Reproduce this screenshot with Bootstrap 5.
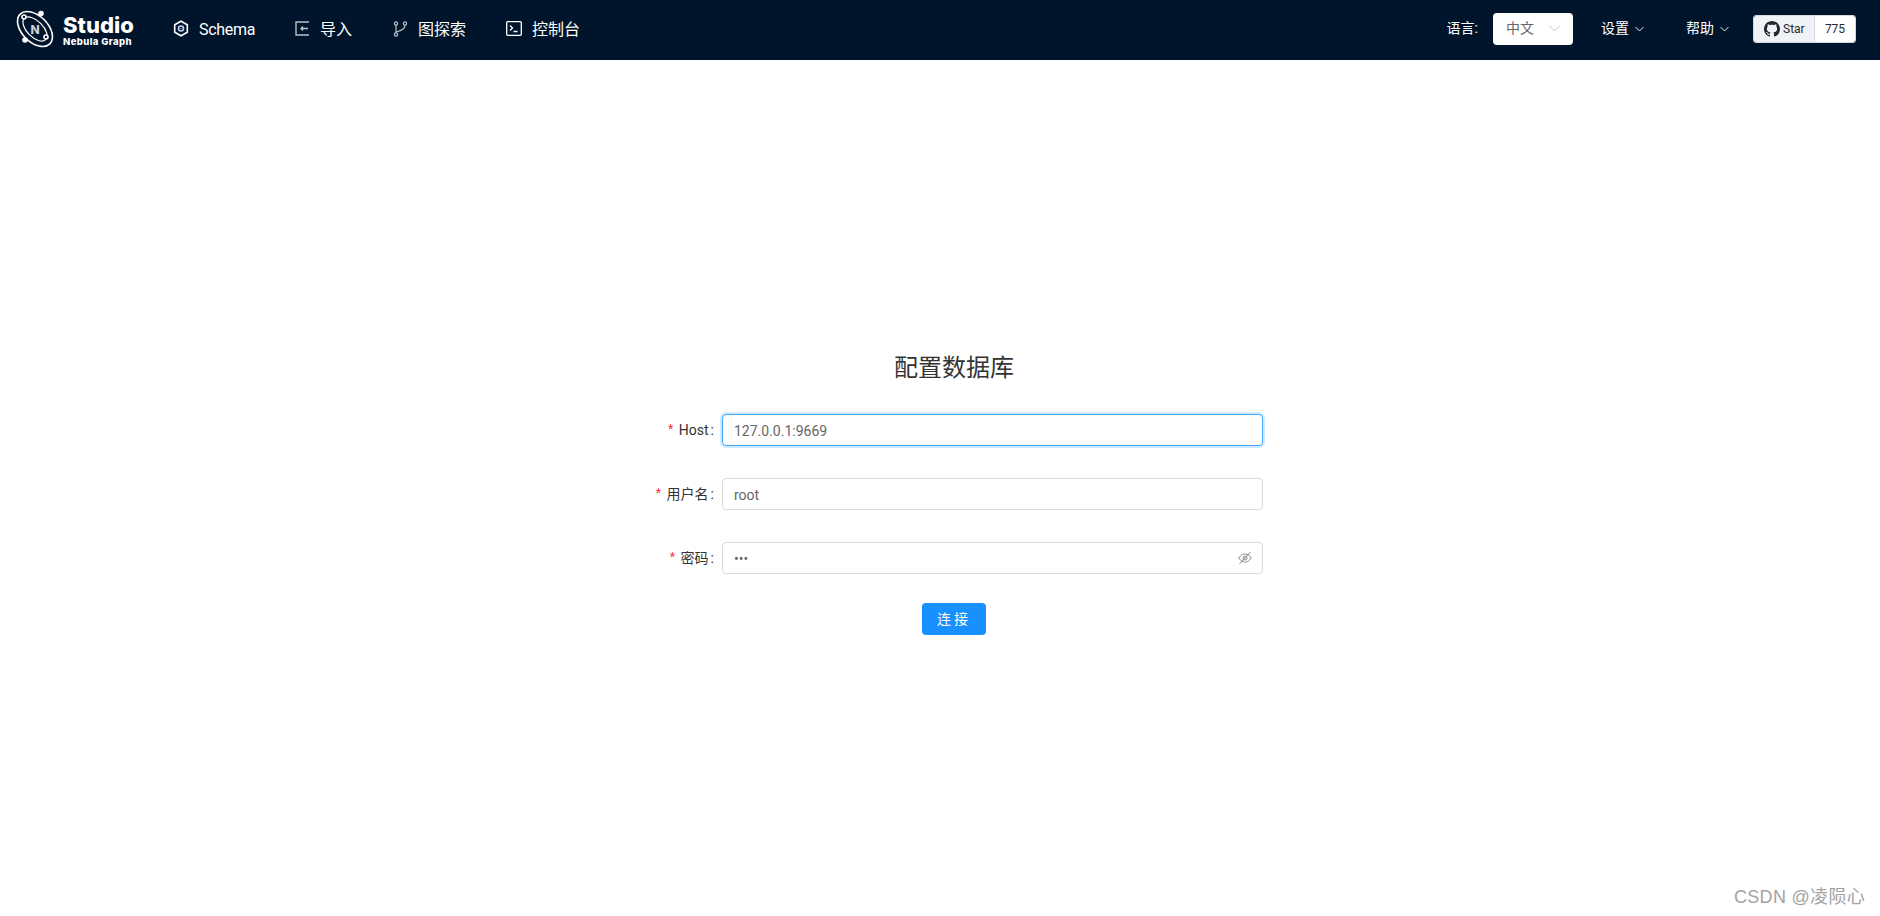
<!DOCTYPE html>
<html lang="zh-CN">
<head>
    <meta charset="UTF-8">
    <meta name="viewport" content="width=device-width, initial-scale=1.0">
    <title>Nebula Graph Studio</title>
    <link href="https://cdn.jsdelivr.net/npm/bootstrap@5.3.0/dist/css/bootstrap.min.css" rel="stylesheet">
    <style>
        body {
            font-family: Roboto, "Noto Sans CJK SC", sans-serif;
            font-size: 14px;
            color: #333;
            background: #fff;
            height: 916px;
            overflow: hidden;
        }
        .top-bar { height: 60px; background: #00152b; color: #fff; padding: 0 24px 3px 15px; }
        .brand-box { width: 158px; }
        .brand-text { margin-left: 8px; color: #fff; padding-top: 2px; }
        .brand-name { font-family: "Inter", sans-serif; font-weight: 800; font-size: 22px; line-height: 24px; }
        .brand-sub { font-family: "Inter", sans-serif; font-weight: 800; font-size: 9.5px; line-height: 10px; letter-spacing: .4px; }
        .menu-link { color: #fff; font-size: 16px; text-decoration: none; gap: 10px; }
        .menu-link svg { flex: none; }
        .menu-link span { padding-top: 2px; }
        .menu-schema { width: 122px; }
        .menu-schema span { letter-spacing: -.3px; }
        .menu-import { width: 98px; }
        .menu-explore { width: 113px; }
        .right-label { color: #fff; font-size: 14px; text-decoration: none; }
        .chev-gap { margin-right: 6px; }
        .lang-box { width: 80px; height: 32px; background: #fff; border-radius: 4px; color: #666; padding: 0 13px; margin-left: 15px; margin-right: 28px; }
        .help-gap { margin-right: 30px; width: 55px; }
        .gh-box { width: 103px; height: 28px; border-radius: 3px; border: 1px solid #d5d8dc; font-size: 12px; color: #24292f; overflow: hidden; margin-left: 24px; }
        .gh-star { width: 61px; background: #eff2f6; gap: 3px; padding-left: 10px; border-right: 1px solid #d5d8dc; }
        .gh-count { background: #fff; flex: 1; text-align: center; }
        .login-area { padding-left: 28px; padding-top: 290px; }
        .login-box { width: 640px; }
        .login-title { font-size: 24px; font-weight: 400; line-height: 36px; color: #333; text-align: center; margin-bottom: 28px; }
        .form-line { height: 32px; margin-bottom: 32px; padding-right: 11px; }
        .form-line-last { margin-bottom: 29px; }
        .form-name { width: 88px; text-align: right; color: #333; white-space: nowrap; padding-top: 2px; }
        .form-name::after { content: ":"; margin: 0 8px 0 2px; }
        .req-mark { color: #f5222d; margin-right: 4px; font-family: "Liberation Mono", monospace; }
        .field-box { flex: 1; height: 32px; border: 1px solid #d9d9d9; border-radius: 4px; padding: 2px 11px 0; color: #666; background: #fff; font-size: 14px; box-shadow: none; }
        .field-box:focus { outline: none; border-color: #40a9ff; box-shadow: 0 0 0 2px rgba(24, 144, 255, .2); color: #666; }
        .field-wrap { flex: 1; }
        .eye-icon { position: absolute; right: 11px; top: 9px; }
        .go-btn { width: 64px; height: 32px; background: #1890ff; color: #fff; border: none; border-radius: 4px; font-size: 14px; padding: 0; letter-spacing: 3px; }
        .mark-text { position: absolute; right: 15px; bottom: 5px; font-family: "Liberation Sans", "Noto Sans CJK SC", sans-serif; font-size: 18px; letter-spacing: .3px; color: #a3a3a3; }
    </style>
</head>
<body>
    <nav class="top-bar d-flex align-items-center">
        <div class="brand-box d-flex align-items-center">
            <svg width="40" height="40" viewBox="0 0 40 40" fill="none" stroke="#fff" stroke-width="1.6">
                <ellipse cx="20" cy="20" rx="21" ry="13" transform="rotate(45 20 20)"/>
                <ellipse cx="20" cy="20" rx="15" ry="8" transform="rotate(45 20 20)" stroke-width="1.2"/>
                <circle cx="26" cy="4.5" r="2" fill="#fff"/>
                <circle cx="9" cy="8" r="2" fill="#00152b"/>
                <circle cx="10" cy="31" r="2" fill="#fff"/>
                <circle cx="31" cy="28" r="2" fill="#00152b"/>
                <text x="20" y="25" text-anchor="middle" fill="#ccc" stroke="none" font-family="Inter" font-size="12" font-weight="800">N</text>
            </svg>
            <div class="brand-text">
                <div class="brand-name">Studio</div>
                <div class="brand-sub">Nebula Graph</div>
            </div>
        </div>
        <a class="menu-link menu-schema d-flex align-items-center" href="#">
            <svg width="16" height="17" viewBox="0 0 16 17" fill="none" stroke="#fff" stroke-width="1.6"><path d="M8 1.200l6.300 3.600v7.400L8 15.800l-6.300-3.600V4.800z"/><circle cx="8" cy="8.500" r="2.500" stroke="#c5cdf5"/><circle cx="8" cy="8.500" r=".6" fill="#c5cdf5" stroke="none"/></svg>
            <span>Schema</span>
        </a>
        <a class="menu-link menu-import d-flex align-items-center" href="#">
            <svg width="15" height="15" viewBox="0 0 15 15" fill="none" stroke="#b8c0c8" stroke-width="1.4"><path d="M14 1H1v13h13M13 7.500H6M8 5.500l-2 2 2 2"/></svg>
            <span>导入</span>
        </a>
        <a class="menu-link menu-explore d-flex align-items-center" href="#">
            <svg width="15" height="16" viewBox="0 0 15 16" fill="none" stroke="#b8c0c8" stroke-width="1.2"><circle cx="3" cy="2.500" r="1.600"/><circle cx="3" cy="13.500" r="1.600"/><circle cx="12" cy="2.500" r="1.600"/><path d="M3 4.100v7.800M12 4.100c0 4-3.500 5-9 7"/></svg>
            <span>图探索</span>
        </a>
        <a class="menu-link d-flex align-items-center" href="#">
            <svg width="16" height="15" viewBox="0 0 16 15" fill="none" stroke="#fff" stroke-width="1.3"><rect x=".7" y=".7" width="14.600" height="13.600" rx="1"/><path d="M4 4.500l2.500 2.500L4 9.500M7.500 10.500h4"/></svg>
            <span>控制台</span>
        </a>
        <div class="ms-auto d-flex align-items-center">
            <span class="right-label">语言:</span>
            <div class="lang-box d-flex align-items-center justify-content-between">
                <span>中文</span>
                <svg width="11" height="7" viewBox="0 0 11 7" fill="none" stroke="#c4c4c4" stroke-width="1"><path d="M.5 1l5 5 5-5"/></svg>
            </div>
            <a class="right-label help-gap d-flex align-items-center" href="#">
                <span class="chev-gap">设置</span>
                <svg width="9" height="6" viewBox="0 0 9 6" fill="none" stroke="#e4e8ec" stroke-width="1"><path d="M.5 1l4 4 4-4"/></svg>
            </a>
            <a class="right-label d-flex align-items-center" href="#">
                <span class="chev-gap">帮助</span>
                <svg width="9" height="6" viewBox="0 0 9 6" fill="none" stroke="#e4e8ec" stroke-width="1"><path d="M.5 1l4 4 4-4"/></svg>
            </a>
            <div class="gh-box d-flex">
                <div class="gh-star d-flex align-items-center">
                    <svg width="16" height="16" viewBox="0 0 16 16" fill="#24292f"><path d="M8 0C3.580 0 0 3.580 0 8c0 3.540 2.290 6.530 5.470 7.590.4.070.55-.17.55-.38 0-.19-.01-.82-.01-1.490-2.010.37-2.530-.49-2.690-.94-.09-.23-.48-.94-.82-1.130-.28-.15-.68-.52-.01-.53.63-.01 1.080.58 1.230.82.72 1.210 1.870.87 2.330.66.07-.52.28-.87.51-1.070-1.780-.2-3.640-.89-3.640-3.950 0-.87.31-1.590.82-2.150-.08-.2-.36-1.020.08-2.120 0 0 .67-.21 2.200.82.64-.18 1.320-.27 2-.27s1.360.09 2 .27c1.530-1.040 2.200-.82 2.200-.82.44 1.100.16 1.920.08 2.120.51.56.82 1.270.82 2.150 0 3.070-1.870 3.750-3.650 3.950.29.25.54.73.54 1.480 0 1.070-.01 1.930-.01 2.200 0 .21.15.46.55.38A8.010 8.010 0 0 0 16 8c0-4.420-3.580-8-8-8z"/></svg>
                    <span>Star</span>
                </div>
                <div class="gh-count d-flex align-items-center justify-content-center">775</div>
            </div>
        </div>
    </nav>

    <main class="login-area d-flex justify-content-center">
        <div class="login-box">
            <h1 class="login-title">配置数据库</h1>
            <form>
                <div class="form-line d-flex align-items-center">
                    <label class="form-name"><span class="req-mark">*</span>Host</label>
                    <input class="field-box" id="hostField" type="text" value="127.0.0.1:9669" autofocus>
                </div>
                <div class="form-line d-flex align-items-center">
                    <label class="form-name"><span class="req-mark">*</span>用户名</label>
                    <input class="field-box" type="text" value="root">
                </div>
                <div class="form-line form-line-last d-flex align-items-center">
                    <label class="form-name"><span class="req-mark">*</span>密码</label>
                    <div class="field-wrap position-relative d-flex">
                        <input class="field-box" type="password" value="123">
                        <svg class="eye-icon" width="14" height="14" viewBox="0 0 14 14" fill="none" stroke="#888" stroke-width="1"><path d="M.8 7C3 3.600 5 3 7 3s4 .6 6.200 4C11 10.400 9 11 7 11S3 10.400.8 7z"/><circle cx="7" cy="7" r="2"/><path d="M1.500 13L12.500 1"/></svg>
                    </div>
                </div>
                <div class="text-center">
                    <button class="go-btn" type="button">连接</button>
                </div>
            </form>
        </div>
    </main>

    <div class="mark-text">CSDN @凌陨心</div>

    <script>
        document.getElementById("hostField").focus();
    </script>
</body>
</html>
